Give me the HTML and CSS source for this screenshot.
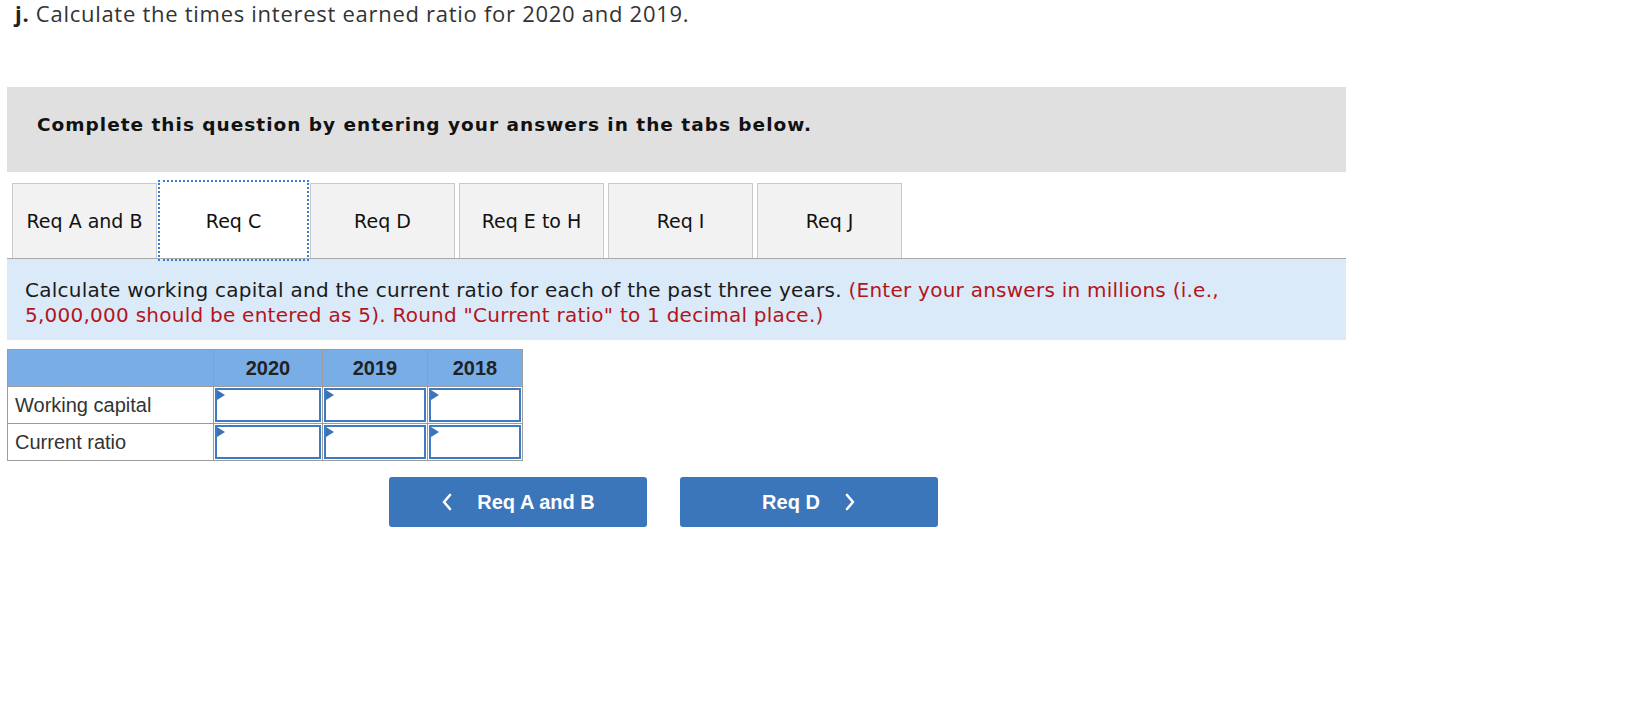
FILE: index.html
```html
<!DOCTYPE html>
<html lang="en">
<head>
  <meta charset="UTF-8" />
  <meta name="viewport" content="width=device-width, initial-scale=1" />
  <title>Req C</title>
  <link rel="stylesheet" href="styles.css">
</head>
<body>
  <p class="title"><b>j.</b> Calculate the times interest earned ratio for 2020 and 2019.</p>

  <div id="panel">
    <div class="prompt">Complete this question by entering your answers in the tabs below.</div>

    <ul class="tabs">
      <li class="tab">Req A and B</li>
      <li class="tab active">Req C</li>
      <li class="tab">Req D</li>
      <li class="tab">Req E to H</li>
      <li class="tab">Req I</li>
      <li class="tab">Req J</li>
    </ul>

    <div class="instructions">Calculate working capital and the current ratio for each of the past three years. <span class="note">(Enter your answers in millions (i.e., 5,000,000 should be entered as 5). Round "Current ratio" to 1 decimal place.)</span></div>

    <table class="answers">
      <tr>
        <th class="label-col"></th>
        <th class="c2020">2020</th>
        <th class="c2019">2019</th>
        <th class="c2018">2018</th>
      </tr>
      <tr>
        <td class="label">Working capital</td>
        <td class="cell"><input type="text" /></td>
        <td class="cell"><input type="text" /></td>
        <td class="cell"><input type="text" /></td>
      </tr>
      <tr>
        <td class="label">Current ratio</td>
        <td class="cell"><input type="text" /></td>
        <td class="cell"><input type="text" /></td>
        <td class="cell"><input type="text" /></td>
      </tr>
    </table>

    <div class="nav">
      <button class="nav-btn">
        <svg width="12" height="18" viewBox="0 0 12 18"><path d="M9 2 L3 9 L9 16" fill="none" stroke="#fff" stroke-width="2.6" stroke-linecap="round" stroke-linejoin="round"/></svg>
        <span>Req A and B</span>
      </button>
      <button class="nav-btn">
        <span>Req D</span>
        <svg width="12" height="18" viewBox="0 0 12 18"><path d="M3 2 L9 9 L3 16" fill="none" stroke="#fff" stroke-width="2.6" stroke-linecap="round" stroke-linejoin="round"/></svg>
      </button>
    </div>
  </div>
</body>
</html>
```

FILE: styles.css
```css
body {
  margin: 0;
  background: #fff;
  font-family: "DejaVu Sans", Verdana, sans-serif;
  color: #1a1a1a;
}

.title {
  margin: 0;
  padding: 0 0 0 15px;
  font-family: "Open Sans", sans-serif;
  font-size: 22px;
  line-height: 27px;
  letter-spacing: 0.72px;
  color: #333;
}

.title b {
  color: #222;
}

#panel {
  margin: 60px 0 0 7px;
  width: 1339px;
}

.prompt {
  background: #e0e0e0;
  padding: 27px 30px 37px;
  font-size: 18.5px;
  font-weight: bold;
  letter-spacing: 1px;
  color: #111;
}

.tabs {
  list-style: none;
  margin: 11px 0 0 5px;
  padding: 0;
  display: flex;
  gap: 4px;
}

.tab {
  width: 145px;
  height: 75px;
  box-sizing: border-box;
  display: flex;
  align-items: center;
  justify-content: center;
  background: #f2f2f2;
  border: 1px solid #c9c9c9;
  border-bottom: none;
  font-size: 19px;
  color: #111;
}

.tab.active {
  background: #fff;
  border-color: #fff;
  outline: 2px dotted #3b7dd2;
  outline-offset: 1px;
}

.instructions {
  background: #daeaf8;
  border-top: 1px solid #a9a9a9;
  padding: 19px 40px 12px 18px;
  font-size: 20px;
  line-height: 25px;
  letter-spacing: 0.25px;
  color: #1a1a1a;
}

.note {
  color: #b3151d;
}

.answers {
  margin-top: 9px;
  border-collapse: collapse;
  font-family: "Liberation Sans", Arial, sans-serif;
  font-size: 20px;
}

.answers th,
.answers td {
  border: 1px solid #9c9c9c;
  height: 37px;
  box-sizing: border-box;
}

.answers th {
  background: #79ade6;
  color: #222;
  font-weight: bold;
  text-align: center;
}

.label-col { width: 206px; }
.c2020 { width: 109px; }
.c2019 { width: 105px; }
.c2018 { width: 95px; }

.answers td.label {
  padding: 0 7px;
  color: #333;
}

.answers td.cell {
  padding: 1px;
  position: relative;
}

.cell input {
  display: block;
  width: 100%;
  height: 34px;
  box-sizing: border-box;
  border: 2px solid #3f7bc3;
  margin: 0;
  padding: 0 6px;
  background: #fff;
}

.cell::before {
  content: "";
  position: absolute;
  left: 3px;
  top: 3px;
  border-left: 8px solid #3a73ba;
  border-top: 5px solid transparent;
  border-bottom: 5px solid transparent;
}

.nav {
  display: flex;
  gap: 33px;
  margin: 16px 0 0 382px;
}

.nav-btn {
  width: 258px;
  height: 50px;
  display: flex;
  align-items: center;
  justify-content: center;
  gap: 24px;
  background: #3b76ba;
  border: none;
  border-radius: 3px;
  color: #fff;
  font-family: "Liberation Sans", Arial, sans-serif;
  font-size: 20px;
  font-weight: bold;
  cursor: pointer;
}
```
